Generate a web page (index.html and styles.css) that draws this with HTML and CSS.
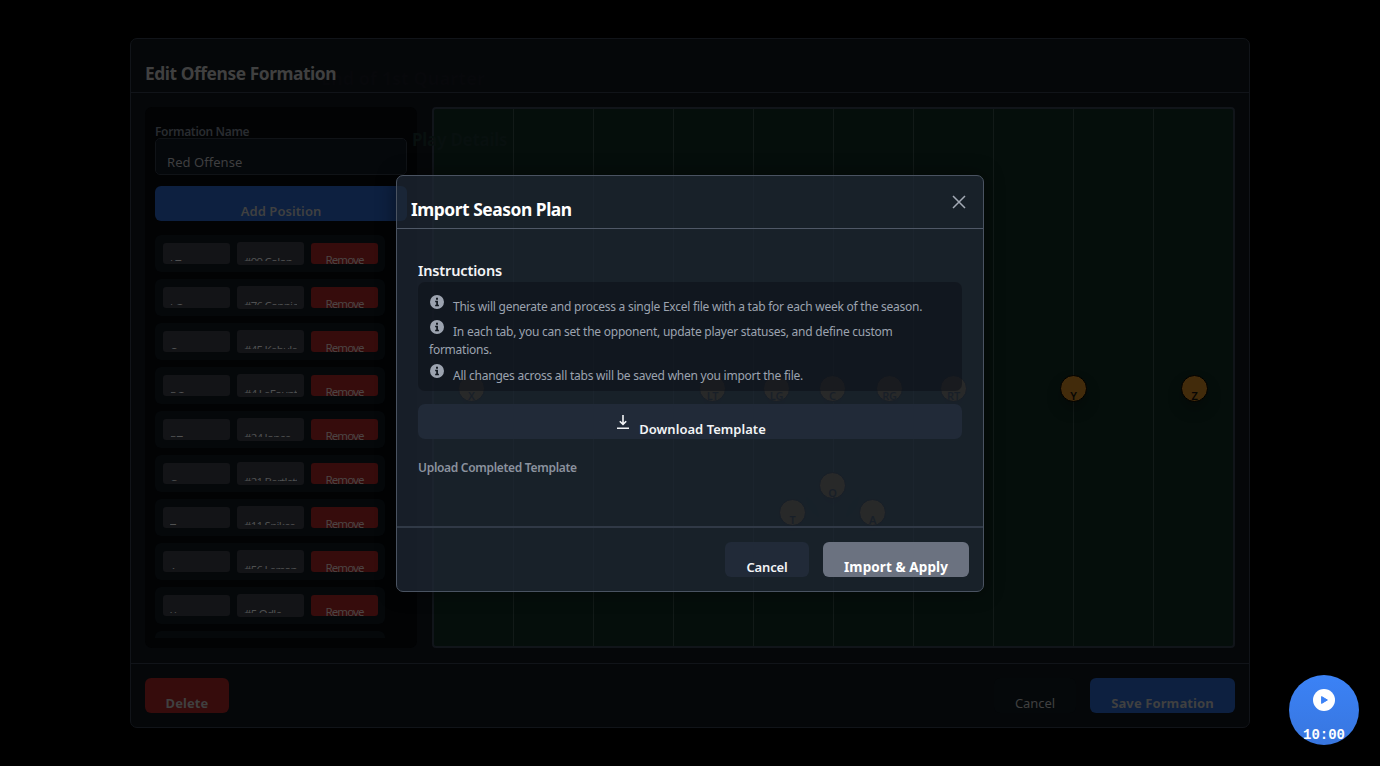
FILE: index.html
```html
<!DOCTYPE html>
<html lang="en">
<head>
<meta charset="utf-8">
<title>Import Season Plan</title>
<link rel="stylesheet" href="styles.css">
</head>
<body>
<div class="stage">
  <section class="editor">
    <span class="ghost ghost-quarter">End of 1st Quarter</span>
    <header class="editor-head"><h2 class="editor-title">Edit Offense Formation</h2></header>
    <div class="editor-body">
      <aside class="side">
        <label class="side-label">Formation Name</label>
        <div class="name-input">Red Offense</div>
        <button class="btn add"><span>Add Position</span></button>
        <div class="rows">
          <div class="row"><div class="pos"><span>LT</span></div><div class="player"><span>#99 Colon</span></div><button class="remove">Remove</button></div>
          <div class="row"><div class="pos"><span>LG</span></div><div class="player"><span>#76 Connie</span></div><button class="remove">Remove</button></div>
          <div class="row"><div class="pos"><span>C</span></div><div class="player"><span>#45 Kabula</span></div><button class="remove">Remove</button></div>
          <div class="row"><div class="pos"><span>RG</span></div><div class="player"><span>#4 LaFount</span></div><button class="remove">Remove</button></div>
          <div class="row"><div class="pos"><span>RT</span></div><div class="player"><span>#24 Jones</span></div><button class="remove">Remove</button></div>
          <div class="row"><div class="pos"><span>Q</span></div><div class="player"><span>#21 Bartlett</span></div><button class="remove">Remove</button></div>
          <div class="row"><div class="pos"><span>T</span></div><div class="player"><span>#11 Spikes</span></div><button class="remove">Remove</button></div>
          <div class="row"><div class="pos"><span>A</span></div><div class="player"><span>#56 Larson</span></div><button class="remove">Remove</button></div>
          <div class="row"><div class="pos"><span>X</span></div><div class="player"><span>#5 Odle</span></div><button class="remove">Remove</button></div>
          <div class="row"><div class="pos"></div><div class="player"></div><button class="remove"></button></div>
        </div>
      </aside>
      <div class="field">
        <span class="ghost ghost-play">Play Details</span>
        <i class="mark" style="left:38px;top:280px"><b>X</b></i>
        <i class="mark" style="left:279px;top:280px"><b>LT</b></i>
        <i class="mark" style="left:343px;top:280px"><b>LG</b></i>
        <i class="mark" style="left:399px;top:280px"><b>C</b></i>
        <i class="mark" style="left:456px;top:280px"><b>RG</b></i>
        <i class="mark" style="left:520px;top:280px"><b>RT</b></i>
        <i class="mark" style="left:640px;top:280px"><b>Y</b></i>
        <i class="mark" style="left:761px;top:280px"><b>Z</b></i>
        <i class="mark" style="left:399px;top:377px"><b>Q</b></i>
        <i class="mark" style="left:359px;top:404px"><b>T</b></i>
        <i class="mark" style="left:439px;top:404px"><b>A</b></i>
      </div>
    </div>
    <footer class="editor-foot">
      <button class="btn delete"><span>Delete</span></button>
      <button class="btn plain"><span>Cancel</span></button>
      <button class="btn save"><span>Save Formation</span></button>
    </footer>
  </section>

  <section class="dialog">
    <header class="dialog-head">
      <h2 class="dialog-title">Import Season Plan</h2>
      <svg class="close" viewBox="0 0 14 14"><path d="M1 1l12 12M13 1L1 13"/></svg>
    </header>
    <div class="dialog-body">
      <h3 class="sub">Instructions</h3>
      <div class="info">
        <p><svg class="i" viewBox="0 0 16 16"><path fill-rule="evenodd" d="M8 0a8 8 0 1 0 0 16A8 8 0 0 0 8 0zM6.9 3.2h2.2v2.1H6.9zM5.9 6.6h3.2v4.6h1.1v1.6H5.9v-1.6h1.2v-3H5.9z"/></svg><span>This will generate and process a single Excel file with a tab for each week of the season.</span></p>
        <p><svg class="i" viewBox="0 0 16 16"><path fill-rule="evenodd" d="M8 0a8 8 0 1 0 0 16A8 8 0 0 0 8 0zM6.9 3.2h2.2v2.1H6.9zM5.9 6.6h3.2v4.6h1.1v1.6H5.9v-1.6h1.2v-3H5.9z"/></svg><span>In each tab, you can set the opponent, update player statuses, and define custom<br>formations.</span></p>
        <p><svg class="i" viewBox="0 0 16 16"><path fill-rule="evenodd" d="M8 0a8 8 0 1 0 0 16A8 8 0 0 0 8 0zM6.9 3.2h2.2v2.1H6.9zM5.9 6.6h3.2v4.6h1.1v1.6H5.9v-1.6h1.2v-3H5.9z"/></svg><span>All changes across all tabs will be saved when you import the file.</span></p>
      </div>
      <button class="download">
        <svg class="dl" viewBox="0 0 14 16"><path d="M7 1v9M3.8 7.2L7 10.4l3.2-3.2M1 14.2h12"/></svg>
        <span>Download Template</span>
      </button>
      <p class="upload">Upload Completed Template</p>
    </div>
    <footer class="dialog-foot">
      <button class="btn cancel"><span>Cancel</span></button>
      <button class="btn apply"><span>Import &amp; Apply</span></button>
    </footer>
  </section>

  <div class="timer">
    <svg class="play" viewBox="0 0 22 22"><circle cx="11" cy="11" r="11" fill="#fff"/><path d="M8.6 7.6L14.4 11l-5.8 3.4z" fill="#3b82f6" stroke="#3b82f6" stroke-linejoin="round"/></svg>
    <span>10:00</span>
  </div>
</div>
</body>
</html>
```
FILE: styles.css
```css
* { box-sizing: border-box; margin: 0; padding: 0; }
body { background: #000; font-family: "Noto Sans", "Open Sans", sans-serif; overflow: hidden; }
button { border: 0; font-family: inherit; display: block; }

.stage { display: grid; width: 1380px; height: 766px; place-items: center; overflow: hidden; }
.stage > * { grid-area: 1 / 1; }

.editor {
  position: relative; width: 1120px; height: 690px;
  display: flex; flex-direction: column;
  background: #050709; border: 1px solid #111419; border-radius: 7px;
}
.editor-head { position: relative; height: 54px; padding: 23px 14px 0; border-bottom: 1px solid #111419; }
.editor-title { font-size: 17.4px; line-height: 22px; font-weight: 700; letter-spacing: -0.45px; color: #404040; }
.editor-body { flex: 1; display: flex; justify-content: space-between; padding: 14px 14px 15px; min-height: 0; }

.side {
  width: 272px; padding: 18px 10px 10px; border-radius: 7px; background: #020304;
  display: flex; flex-direction: column; overflow: hidden;
}
.side-label { flex: none; font-size: 12px; line-height: 13px; font-weight: 600; letter-spacing: -0.35px; color: #292c30; white-space: nowrap; }
.name-input {
  flex: none; width: 252px; height: 37px; padding: 13px 11px 0;
  border: 1px solid #101317; border-radius: 5px; background: #05080b;
  font-size: 13px; line-height: 20px; letter-spacing: 0.05px; color: #3f3f40;
}
.btn { height: 35px; border-radius: 6px; overflow: hidden; font-size: 13px; text-align: center; color: #404040; }
.btn span { display: block; padding-top: 15px; line-height: 20px; white-space: nowrap; }
.add { flex: none; width: 252px; margin-top: 11px; background: #0d2040; font-weight: 600; letter-spacing: 0.08px; }
.rows { flex: 1; width: 230px; margin-top: 14px; display: flex; flex-direction: column; gap: 7px; overflow: hidden; }
.row {
  flex: none; height: 37px; padding: 0 6px 0 8px; display: grid; grid-template-columns: repeat(3, 67px); gap: 7px;
  align-items: center; border-radius: 6px; background: #05080a;
}
.pos, .player { height: 21px; padding: 0 7px; border-radius: 3px; background: #131417; overflow: hidden; }
.player { height: 23px; }
.pos span, .player span {
  display: block; height: 18px; padding-top: 13px; overflow: hidden; white-space: nowrap;
  font-size: 11px; line-height: 16px; letter-spacing: -0.2px; color: #505152;
}
.player span { height: 19px; padding-top: 12px; font-size: 11.5px; letter-spacing: -0.75px; }
.remove {
  height: 21px; border-radius: 3px; background: #360c0c; overflow: hidden; padding-top: 9px;
  font-size: 11.5px; line-height: 16px; letter-spacing: -0.9px; color: #4c4544;
}

.field {
  position: relative; width: 803px; border: 2px solid #11151a; border-radius: 4px;
  background: repeating-linear-gradient(90deg, transparent 0 79px, #121a18 79px 80px), #050e0b;
}
.mark {
  position: absolute; width: 27px; height: 27px; margin-left: -14px; margin-top: -14px; border: 1px solid #000;
  border-radius: 50%; background: #422b0b; box-shadow: 0 8px 14px rgba(0, 0, 0, .25);
  overflow: hidden; font-style: normal; text-align: center;
}
.mark b { display: block; padding-top: 12px; font-size: 11px; line-height: 16px; font-weight: 600; letter-spacing: -0.2px; color: #070604; }

.editor-foot { height: 64px; padding: 14px; display: flex; border-top: 1px solid #111419; }
.delete { width: 84px; margin-right: auto; background: #360c0c; font-weight: 700; letter-spacing: 0.1px; }
.plain { width: 82px; background: #05080a; margin-right: 14px; letter-spacing: -0.05px; }
.save { width: 145px; background: #0d2040; font-weight: 700; letter-spacing: 0.1px; }

.ghost { position: absolute; font-weight: 700; white-space: nowrap; }
.ghost-quarter { left: 190px; top: 27px; font-size: 18px; line-height: 24px; color: #07080b; }
.ghost-play { left: -22px; top: 20px; font-size: 17px; line-height: 22px; letter-spacing: -0.3px; color: #08100f; }

.dialog {
  position: relative; width: 588px; height: 417px; display: flex; flex-direction: column;
  border: 1px solid #4a5361; border-radius: 7px; background: rgba(31, 41, 53, .74);
  box-shadow: 0 0 20px rgba(0, 0, 0, .45);
}
.dialog-head { height: 53px; padding: 22px 14px 0; display: flex; justify-content: space-between; border-bottom: 1px solid #4f5866; }
.dialog-title { font-size: 17.4px; line-height: 22px; font-weight: 700; letter-spacing: -0.46px; color: #fff; }
.close { width: 14px; height: 14px; margin: -3px 3.5px 0 0; fill: none; stroke: #a3aab5; stroke-width: 1.5; }
.dialog-body { flex: 1; padding: 30px 21px 0; }
.sub { font-size: 14.5px; line-height: 22px; font-weight: 600; letter-spacing: -0.15px; color: #f3f4f6; }
.info { height: 109px; margin-top: 1px; padding: 13px 11px 0; border-radius: 7px; background: rgba(12, 16, 24, .55); color: #9ca3af; }
.info p { font-size: 12px; line-height: 18px; letter-spacing: -0.24px; margin-bottom: 4.6px; padding-top: 3px; margin-top: -3px; white-space: nowrap; }
.i { width: 14px; height: 14px; margin: 0 9px 0 1px; vertical-align: 2px; fill: #9ca3af; }
.download {
  width: 544px; height: 35px; margin-top: 13px; padding-left: 2px; display: flex; justify-content: center; border-radius: 7px;
  background: #212a38; color: #f3f4f6; font-size: 13px; font-weight: 600; letter-spacing: 0.03px;
}
.dl { width: 14px; height: 16px; margin: 10px 9px 0 0; fill: none; stroke: #f3f4f6; stroke-width: 1.6; }
.download span { padding-top: 15px; line-height: 20px; }
.upload { margin-top: 19px; font-size: 12px; line-height: 20px; font-weight: 600; letter-spacing: -0.3px; color: #8b929e; }
.dialog-foot { height: 65px; padding: 14px; display: flex; justify-content: flex-end; gap: 14px; border-top: 2px solid #303946; }
.cancel { width: 84px; background: #212a38; color: #f3f4f6; font-weight: 600; letter-spacing: -0.15px; }
.apply { width: 146px; background: #6b7280; color: #fff; font-weight: 700; font-size: 13.5px; letter-spacing: 0.1px; }

.timer {
  place-self: end; width: 70px; height: 70px; margin: 0 21px 21px 0; padding-top: 14px;
  display: flex; flex-direction: column; align-items: center; border-radius: 50%; overflow: hidden;
  background: linear-gradient(#3b82f6, #3876df);
  color: #fff; font: 700 14px/18px "Liberation Mono", monospace;
}
.play { flex: none; width: 22px; height: 22px; }
.timer span { margin-top: 15px; }
```
